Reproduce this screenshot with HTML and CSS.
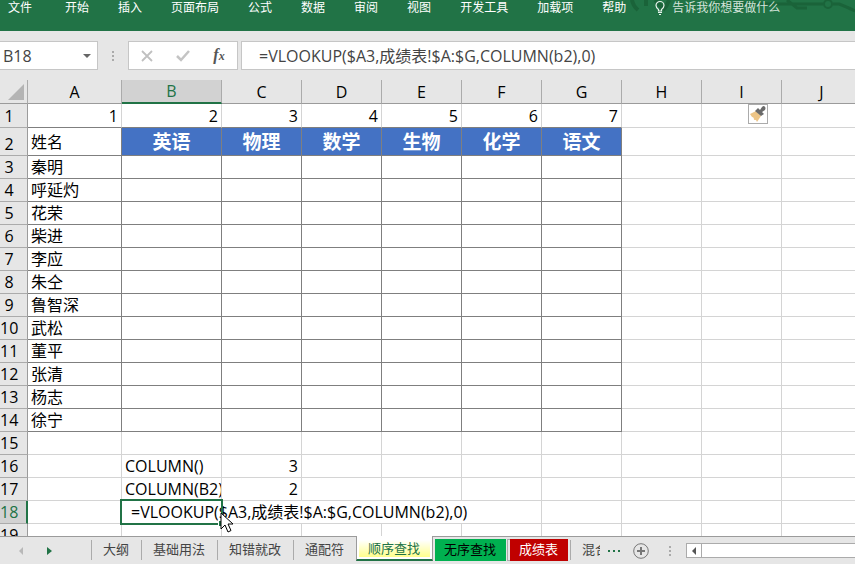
FILE: index.html
```html
<!DOCTYPE html>
<html lang="zh-CN">
<head>
    <meta charset="UTF-8">
    <meta name="viewport" content="width=device-width, initial-scale=1.0">
    <title>成绩表</title>
    <link rel="stylesheet" href="styles.css">
</head>
<body>

    <!-- Ribbon -->
    <header class="ribbon">
        <svg class="ribbon-art" width="240" height="16" viewBox="0 0 240 16" aria-hidden="true">
            <g fill="none" stroke="#1a6339" stroke-width="4">
                <path d="M17 0 Q18 6 23 10 M31 0 V6 M40 0 L48 8 M54 0 Q52 6 48 10"/>
                <path d="M98 4 H208 M172 0 L182 8 H192 M218 4 H224 Q230 6 240 11" stroke-width="3"/>
                <circle cx="213" cy="4" r="4" stroke-width="2"/>
            </g>
        </svg>
        <nav class="menu">
            <a class="file" href="#">文件</a>
            <a href="#">开始</a>
            <a href="#">插入</a>
            <a href="#">页面布局</a>
            <a href="#">公式</a>
            <a href="#">数据</a>
            <a href="#">审阅</a>
            <a href="#">视图</a>
            <a href="#">开发工具</a>
            <a href="#">加载项</a>
            <a href="#">帮助</a>
            <a class="tell-me" href="#">
                <svg width="10" height="16" viewBox="0 0 10 16" fill="none" stroke="#e8f2ec">
                    <path d="M3.500 11 V9.500 Q1 7.500 1 5.500 A4 4 0 0 1 9 5.500 Q9 7.500 6.500 9.500 V11 Z" stroke-width="1.200"/>
                    <path d="M3 12.500 H7 M4 14.500 H6"/>
                </svg>
                告诉我你想要做什么
            </a>
        </nav>
    </header>

    <!-- Name box and formula bar -->
    <div class="formula-bar">
        <div class="name-box">
            <input type="text" value="B18" aria-label="名称框">
            <button type="button" aria-label="名称列表"><span class="caret"></span></button>
        </div>
        <span class="dots"></span>
        <div class="formula-buttons">
            <button type="button" aria-label="取消">
                <svg width="12" height="12" viewBox="0 0 12 12" fill="none" stroke="#c0c0c0" stroke-width="1.800"><path d="M1 1 L11 11 M11 1 L1 11"/></svg>
            </button>
            <button type="button" aria-label="输入">
                <svg width="14" height="12" viewBox="0 0 14 12" fill="none" stroke="#c4c4c4" stroke-width="2.500"><path d="M1 6 L5 10 L13 1"/></svg>
            </button>
            <button type="button" class="fx" aria-label="插入函数">f<small>x</small></button>
        </div>
        <input class="formula" type="text" value="=VLOOKUP($A3,成绩表!$A:$G,COLUMN(b2),0)" aria-label="编辑栏">
    </div>

    <!-- Worksheet -->
    <main class="sheet">
        <table>
            <colgroup>
                <col class="col-head"><col class="col-a"><col class="col-b">
                <col><col><col><col><col><col><col><col>
            </colgroup>
            <thead>
                <tr>
                    <th class="corner"><svg width="16" height="16" viewBox="0 0 16 16"><path d="M16 0 V16 H0 Z" fill="#b4b4b4"/></svg></th>
                    <th>A</th><th class="current">B</th><th>C</th><th>D</th><th>E</th><th>F</th><th>G</th><th>H</th><th>I</th><th>J</th>
                </tr>
            </thead>
            <tbody>
                <tr class="numbers">
                    <th>1</th><td>1</td><td>2</td><td>3</td><td>4</td><td>5</td><td>6</td><td>7</td><td></td>
                    <td class="anchor">
                        <button type="button" class="format-options" aria-label="格式选项">
                            <svg width="16" height="16" viewBox="0 0 16 16">
                                <path d="M0 8 L6 5 L11 10 L7 16 Q6 13 4 14 Q4 11 2 11 Z" fill="#edc587"/>
                                <path d="M5 5 L8 2 L10 4 L12 1 Q14 -1 15 1 Q16 2 15 4 L12 6 L14 8 L11 10 Z" fill="#6a6a6a"/>
                            </svg>
                        </button>
                    </td>
                    <td></td>
                </tr>
                <tr class="titles"><th>2</th><td>姓名</td><td>英语</td><td>物理</td><td>数学</td><td>生物</td><td>化学</td><td>语文</td><td></td><td></td><td></td></tr>
                <tr class="score"><th>3</th><td>秦明</td><td></td><td></td><td></td><td></td><td></td><td></td><td></td><td></td><td></td></tr>
                <tr class="score"><th>4</th><td>呼延灼</td><td></td><td></td><td></td><td></td><td></td><td></td><td></td><td></td><td></td></tr>
                <tr class="score"><th>5</th><td>花荣</td><td></td><td></td><td></td><td></td><td></td><td></td><td></td><td></td><td></td></tr>
                <tr class="score"><th>6</th><td>柴进</td><td></td><td></td><td></td><td></td><td></td><td></td><td></td><td></td><td></td></tr>
                <tr class="score"><th>7</th><td>李应</td><td></td><td></td><td></td><td></td><td></td><td></td><td></td><td></td><td></td></tr>
                <tr class="score"><th>8</th><td>朱仝</td><td></td><td></td><td></td><td></td><td></td><td></td><td></td><td></td><td></td></tr>
                <tr class="score"><th>9</th><td>鲁智深</td><td></td><td></td><td></td><td></td><td></td><td></td><td></td><td></td><td></td></tr>
                <tr class="score"><th>10</th><td>武松</td><td></td><td></td><td></td><td></td><td></td><td></td><td></td><td></td><td></td></tr>
                <tr class="score"><th>11</th><td>董平</td><td></td><td></td><td></td><td></td><td></td><td></td><td></td><td></td><td></td></tr>
                <tr class="score"><th>12</th><td>张清</td><td></td><td></td><td></td><td></td><td></td><td></td><td></td><td></td><td></td></tr>
                <tr class="score"><th>13</th><td>杨志</td><td></td><td></td><td></td><td></td><td></td><td></td><td></td><td></td><td></td></tr>
                <tr class="score"><th>14</th><td>徐宁</td><td></td><td></td><td></td><td></td><td></td><td></td><td></td><td></td><td></td></tr>
                <tr><th>15</th><td></td><td></td><td></td><td></td><td></td><td></td><td></td><td></td><td></td><td></td></tr>
                <tr><th>16</th><td></td><td>COLUMN()</td><td class="num">3</td><td></td><td></td><td></td><td></td><td></td><td></td><td></td></tr>
                <tr><th>17</th><td></td><td>COLUMN(B2)</td><td class="num">2</td><td></td><td></td><td></td><td></td><td></td><td></td><td></td></tr>
                <tr class="editing">
                    <th class="current">18</th><td></td>
                    <td colspan="5" class="anchor">
                        <span class="edit-text">=VLOOKUP($A3,成绩表!$A:$G,COLUMN(b2),0)</span>
                        <span class="selection">
                            <svg class="pointer" width="14" height="21" viewBox="0 0 14 21"><path d="M1 1 V17 L5 13 L8 20 L11 18.500 L8 12 H13 Z" fill="#fff" stroke="#000"/></svg>
                        </span>
                    </td>
                    <td></td><td></td><td></td><td></td>
                </tr>
                <tr><th>19</th><td></td><td></td><td></td><td></td><td></td><td></td><td></td><td></td><td></td><td></td></tr>
            </tbody>
        </table>
    </main>

    <!-- Sheet tabs -->
    <footer class="tab-bar">
        <div class="tab-arrows">
            <button type="button" aria-label="上一个"><span class="arrow left"></span></button>
            <button type="button" aria-label="下一个"><span class="arrow right"></span></button>
        </div>
        <nav class="tabs">
            <a href="#">大纲</a>
            <a href="#">基础用法</a>
            <a href="#">知错就改</a>
            <a href="#">通配符</a>
            <a class="active" href="#"><span>顺序查找</span></a>
            <a class="green" href="#">无序查找</a>
            <a class="red" href="#">成绩表</a>
            <a class="cut" href="#"><span>混合</span></a>
        </nav>
        <button type="button" class="more" aria-label="更多工作表"><i></i><i></i><i></i></button>
        <button type="button" class="add" aria-label="新工作表">
            <svg width="16" height="16" viewBox="0 0 16 16" fill="none" stroke="#777"><circle cx="8" cy="8" r="7.300"/><path d="M4 8 H12 M8 4 V12" stroke-width="2"/></svg>
        </button>
        <span class="dots"></span>
        <div class="scrollbar">
            <button type="button" aria-label="向左滚动"><span class="arrow left"></span></button>
        </div>
    </footer>

</body>
</html>
```
FILE: styles.css
```css
* {
    box-sizing: border-box;
}
body {
    margin: 0;
    height: 100vh;
    display: flex;
    flex-direction: column;
    overflow: hidden;
    background-color: #e6e6e6;
    color: #000;
    font-family: "Open Sans", "Noto Sans CJK SC", sans-serif;
    font-size: 16px;
}
a {
    color: inherit;
    text-decoration: none;
}
button {
    display: flex;
    align-items: center;
    justify-content: center;
    padding: 0;
    border: none;
    background: none;
    font: inherit;
    cursor: pointer;
}
input {
    min-width: 0;
    border: none;
    outline: none;
    background: none;
    color: #444;
    font: inherit;
}
svg {
    display: block;
    flex: none;
}

/* Ribbon */
.ribbon {
    position: relative;
    flex: none;
    height: 31px;
    background-color: #217346;
    color: #fff;
    font-size: 12px;
}
.ribbon-art {
    position: absolute;
    top: 0;
    right: 0;
}
.menu {
    position: relative;
    display: flex;
    gap: 29px;
    padding-left: 8px;
    line-height: 16px;
    white-space: nowrap;
}
.file {
    margin-right: 4px;
}
.tell-me {
    display: flex;
    gap: 7px;
    color: #d3e3da;
}

/* Formula bar */
.formula-bar {
    display: flex;
    flex: none;
    align-items: center;
    height: 49px;
}
.name-box,
.formula-buttons,
.formula {
    height: 29px;
    border: 1px solid #c6c6c6;
    background-color: #fff;
}
.name-box {
    display: flex;
    width: 98px;
    border-left: none;
}
.name-box input {
    flex: 1;
    padding: 0 3px;
}
.name-box button {
    width: 20px;
}
.caret {
    border: 4px solid transparent;
    border-top-color: #666;
    border-bottom: none;
}
.dots {
    width: 2px;
    height: 10px;
    background: repeating-linear-gradient(#aaa 0 2px, transparent 2px 4px);
}
.formula-bar .dots {
    margin: 0 14px;
}
.formula-buttons {
    display: flex;
    width: 110px;
}
.formula-buttons button {
    flex: 1;
}
.formula-buttons .fx {
    align-items: baseline;
    color: #555;
    font: italic bold 16px/26px "Liberation Serif", serif;
}
.fx small {
    font-size: 12px;
}
.formula {
    flex: 1;
    margin-left: 3px;
    padding: 0 17px 2px;
    border-right: none;
}

/* Worksheet */
.sheet {
    flex: 1;
    min-height: 0;
    overflow: hidden;
    background-color: #fff;
}
table {
    width: 862px;
    border-spacing: 0;
    table-layout: fixed;
    line-height: 22px;
}
col {
    width: 80px;
}
.col-head {
    width: 28px;
}
.col-a {
    width: 94px;
}
.col-b {
    width: 100px;
}
th,
td {
    height: 23px;
    padding: 0 3px;
    border-right: 1px solid #d4d4d4;
    border-bottom: 1px solid #d4d4d4;
    overflow: hidden;
    white-space: nowrap;
}
th {
    border-color: #ababab;
    background-color: #e6e6e6;
    font-weight: normal;
}
thead th {
    height: 24px;
    border-bottom-color: #9b9b9b;
}
thead .current {
    border-bottom: 2px solid #217346;
    background-color: #d2d2d2;
    color: #217346;
    line-height: 21px;
}
.corner svg {
    margin-left: 5px;
}
tbody th {
    padding: 0 9px 0 0;
    border-right-color: #9b9b9b;
}
tbody th.current {
    border-right: 2px solid #217346;
    padding-right: 8px;
    background-color: #d2d2d2;
    color: #217346;
}
.numbers td {
    height: 24px;
    text-align: right;
}
.num {
    text-align: right;
}
.titles td {
    height: 28px;
}
.titles th {
    vertical-align: bottom;
}
.numbers td:nth-child(-n+8),
.titles td:nth-child(-n+8),
.score td:nth-child(-n+8) {
    border-bottom-color: #7f7f7f;
}
.titles td:nth-child(-n+8),
.score td:nth-child(-n+8) {
    border-right-color: #7f7f7f;
}
.titles td:nth-child(n+3):nth-child(-n+8) {
    background-color: #4472c4;
    color: #fff;
    font-size: 19px;
    font-weight: bold;
    text-align: center;
}
.anchor {
    position: relative;
    overflow: visible;
}
.format-options {
    position: absolute;
    top: 0;
    right: 13px;
    width: 20px;
    height: 20px;
    border: 1px solid #ababab;
    background-color: #fff;
}
.edit-text {
    padding-left: 6px;
}
.selection {
    position: absolute;
    top: -2px;
    left: -2px;
    width: 103px;
    height: 26px;
    border: 2px solid #217346;
}
/* fill handle */
.selection::after {
    content: "";
    position: absolute;
    right: -3px;
    bottom: -3px;
    width: 5px;
    height: 5px;
    border: 1px solid #fff;
    border-right: none;
    border-bottom: none;
    background-color: #217346;
}
.pointer {
    position: absolute;
    z-index: 1;
    top: 11px;
    left: 98px;
}

/* Sheet tabs */
.tab-bar {
    display: flex;
    flex: none;
    align-items: center;
    height: 28px;
    border-top: 1px solid #9b9b9b;
    color: #444;
    font-size: 13px;
}
.tab-arrows {
    display: flex;
    gap: 20px;
    width: 91px;
    padding-left: 16px;
}
.tab-arrows button {
    width: 9px;
}
.arrow {
    border: 4px solid transparent;
}
.arrow.left {
    border-right-color: #b8b8b8;
    border-left: none;
}
.arrow.right {
    border-left: 5px solid #217346;
    border-right: none;
}
.tabs {
    display: flex;
    align-self: stretch;
    white-space: nowrap;
}
.tabs a {
    height: 20px;
    margin-top: 3px;
    padding: 0 12px 0 11px;
    border-left: 1px solid #ababab;
    line-height: 18px;
}
.tabs .active {
    height: 25px;
    margin-top: -1px;
    padding: 4px 2px 2px;
    border-right: 1px solid #9b9b9b;
    border-left-color: #9b9b9b;
    border-bottom: 2px solid #217346;
    background-color: #fff;
    color: #217346;
    line-height: 17px;
}
.active span {
    display: block;
    padding: 0 10px 0 9px;
    background: linear-gradient(#fff, #ffff8c);
}
.tabs .green,
.tabs .red {
    height: 22px;
    margin: 2px 2px 0;
    padding: 0 10px 0 9px;
    border: none;
    line-height: 20px;
}
.tabs .green {
    background-color: #00b050;
    color: #000;
}
.tabs .red {
    background-color: #c00000;
    color: #fff;
}
/* divider between the two coloured tabs */
.tabs .green + .red {
    box-shadow: -3px 0 0 -1px #e6e6e6, -3px 0 0 0 #ababab;
}
.tabs .cut {
    padding-right: 0;
}
.tabs .cut span {
    display: block;
    width: 18px;
    overflow: hidden;
}
.more {
    gap: 3px;
    margin-left: 8px;
}
.more i {
    width: 2px;
    height: 2px;
    background-color: #217346;
}
.add {
    margin: 0 20px 0 13px;
}
.scrollbar {
    display: flex;
    flex: 1;
    height: 15px;
    margin-left: 15px;
    border: 1px solid #ababab;
    border-right: none;
    background-color: #fff;
}
.scrollbar button {
    width: 15px;
    border-right: 1px solid #ababab;
}
.scrollbar .arrow.left {
    border-right-color: #555;
}
```
